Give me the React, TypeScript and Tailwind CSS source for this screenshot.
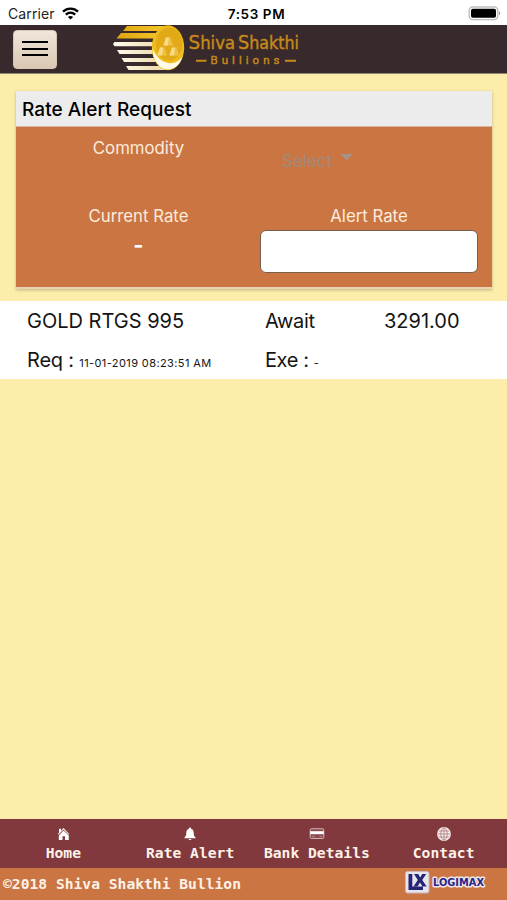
import React from "react";

interface RateAlert {
  id: number;
  commodity: string;
  status: string;
  rate: string;
  requestedAt: string;
  executedAt: string;
}

const alerts: RateAlert[] = [
  {
    id: 1,
    commodity: "GOLD RTGS 995",
    status: "Await",
    rate: "3291.00",
    requestedAt: "11-01-2019 08:23:51 AM",
    executedAt: "-",
  },
];

const HomeIcon = () => (
  <svg width="14" height="14" viewBox="0 0 14 14" fill="#fff">
    <path d="M7.500 1 13.200 6.900l-.7.700-5-5-5 5-.7-.7L3 5.700V1.800h2v2z" />
    <path d="M7.500 3.600 12.800 8.400V13H9V9.200H6.500V13H2.800V8.400z" />
  </svg>
);

const BellIcon = () => (
  <svg width="14" height="14" viewBox="0 0 14 14" fill="#fff">
    <path d="M7 .5c.6 0 1 .4 1 1v.3c1.800.5 2.700 2 2.700 4 0 2.600.5 3.500 1.800 4.700v.8h-11v-.8C2.800 9.300 3.300 8.400 3.300 5.800c0-2 .9-3.500 2.700-4v-.3c0-.6.4-1 1-1z" />
    <path d="M5.600 12h2.800c-.1.700-.7 1.200-1.400 1.200S5.700 12.700 5.600 12z" />
  </svg>
);

const CardIcon = () => (
  <svg width="16" height="14" viewBox="0 0 16 14">
    <rect x="1.200" y="1.700" width="13.600" height="9.800" rx="1.200" fill="#8d4c50" stroke="#d9bfc0" strokeWidth=".9" />
    <rect x="1.200" y="4.200" width="13.600" height="3" fill="#fff" />
    <path d="M3 9.500h3M10.500 9.500H13" stroke="#b98f91" strokeWidth=".8" />
  </svg>
);

const GlobeIcon = () => (
  <svg width="16" height="14" viewBox="0 0 16 14">
    <circle cx="8" cy="7" r="6.900" fill="#f8eeee" />
    <g fill="none" stroke="#a36b6e" strokeWidth=".7">
      <ellipse cx="8" cy="7" rx="3.200" ry="6" />
      <path d="M8 .8v12.400M1.800 7h12.400M2.800 4h10.400M2.800 10h10.400" />
    </g>
  </svg>
);

const tabs = [
  { label: "Home", icon: <HomeIcon /> },
  { label: "Rate Alert", icon: <BellIcon /> },
  { label: "Bank Details", icon: <CardIcon /> },
  { label: "Contact", icon: <GlobeIcon /> },
];

const StatusBar = () => (
  <div className="grid h-[25px] grid-cols-3 items-center bg-white pt-0.5 text-black">
    <div className="flex items-center gap-[7px] pl-2">
      <span className="text-[14px] leading-5 tracking-[0.1px] text-[#222]">Carrier</span>
      <svg width="17" height="13" viewBox="0 0 17 13" fill="none" stroke="#000" strokeWidth="2.300">
        <path d="M1 4.600C5.200.5 11.800.5 16 4.600" />
        <path d="M3.800 7.600c2.700-2.500 6.700-2.500 9.400 0" />
        <path d="M8.500 12.600 5.900 10c1.500-1.300 3.700-1.300 5.200 0z" fill="#000" stroke="none" />
      </svg>
    </div>
    <span className="pl-[6px] text-center text-[13.5px] font-semibold leading-5 tracking-[0.6px]">7:53 PM</span>
    <div className="flex justify-end pr-1.5">
      <svg width="33" height="15" viewBox="0 0 33 15">
        <rect x="1.200" y="1" width="28.600" height="12.600" rx="3.500" fill="#fff" stroke="#bdbdbd" strokeWidth="1.400" />
        <rect x="3" y="2.800" width="25" height="9" rx="1.800" fill="#000" />
        <path d="M31 5.300c1.600.7 1.600 3.300 0 4z" fill="#999" />
      </svg>
    </div>
  </div>
);

const Logo = () => (
  <svg width="190" height="47" viewBox="112 25 190 47" className="block overflow-visible">
    <defs>
      <linearGradient id="gold" x1="0" x2="1">
        <stop offset="0" stopColor="#e0a412" />
        <stop offset="1" stopColor="#f4c829" />
      </linearGradient>
      <linearGradient id="cream" x1="0" x2="1">
        <stop offset="0" stopColor="#fffdf0" />
        <stop offset="1" stopColor="#ecd9a4" />
      </linearGradient>
    </defs>
    <path d="M127 26h38v5h-42zM121 33h38v5.500h-42.500z" fill="url(#gold)" />
    <path d="M114.500 42H156v4.300h-41.500l-1.500-2.200zM117 50h40v4h-37.500zM121.500 58H160v4h-36zM126 66h40v4h-37.500z" fill="url(#cream)" />
    <ellipse cx="168" cy="47.700" rx="16.200" ry="22.500" fill="#eebc1c" />
    <path d="M152.500 48c0 12.500 7 21.500 15.500 21.500 6.500 0 12-5 14.500-13-4 5.500-9 7.500-14 6.500-8-1.500-13-7-16-15z" fill="#fffbe8" />
    <ellipse cx="169" cy="44" rx="13.200" ry="16.500" fill="#e3aa18" />
    <g fill="#f0c046">
      <path d="M166 37.500h4.500l2.500 8h-9.500zM160 47.500h4.500l2.500 8h-9.500zM172 47.500h4.500l2.500 8h-9.500z" />
    </g>
    <g fill="#f8dc85">
      <path d="M166 37.500h3l-1 8h-4.500zM160 47.500h3l-1 8h-4.500zM172 47.500h3l-1 8h-4.500z" />
    </g>
    <g fill="#c88a19" fontFamily="DejaVu Sans, sans-serif" stroke="#c88a19" strokeWidth=".4">
      <text x="188.500" y="48.500" fontSize="18" textLength="46.500" lengthAdjust="spacingAndGlyphs">
        <tspan fontSize="20">S</tspan>hiva
      </text>
      <text x="238" y="48.500" fontSize="18" textLength="61" lengthAdjust="spacingAndGlyphs">
        <tspan fontSize="20">S</tspan>hakthi
      </text>
      <text x="210.500" y="64" fontSize="11.500" fontFamily="Roboto, sans-serif" textLength="69" lengthAdjust="spacing">
        Bullions
      </text>
    </g>
    <path d="M196 60.800h10.500M285 60.800h11" stroke="#c88a19" strokeWidth="2" />
  </svg>
);

const Header = () => (
  <header className="flex h-[49px] border-b border-[#8d8474] bg-[#38292c]">
    <button className="mt-[5px] ml-[13px] flex h-[39px] w-11 flex-col items-center justify-center gap-[4.5px] rounded-[4px] border border-[#d8c5b5] bg-linear-to-b from-[#f0e6da] to-[#d9c8b2] pb-[2px]">
      <span className="h-[2px] w-[26px] bg-black" />
      <span className="h-[2px] w-[26px] bg-black" />
      <span className="h-[2px] w-[26px] bg-black" />
    </button>
    <div className="ml-[55px]">
      <Logo />
    </div>
  </header>
);

const RateAlertForm = () => (
  <section className="mr-[15px] ml-4 mt-[17px] h-[198px] border-b-2 border-[#ecd3b3] bg-[#cb7642] shadow-[0_1px_3px_rgba(0,0,0,0.25)]">
    <h1 className="h-9 border-b border-[#d5b7a0] bg-[#ececec] pl-[6px] text-[19px] font-medium leading-[37px] tracking-[0.07px] text-black">
      Rate Alert Request
    </h1>
    <div className="grid grid-cols-[245px_216px] text-[16.8px] leading-6 text-[#fcebdc]">
      <div className="h-[77px] pt-[9px] text-center">Commodity</div>
      <div className="flex h-[77px] gap-2 pt-[22px] pl-[21px] text-[17px] text-[#a18a78]">
        <span>Select</span>
        <svg width="13" height="6" viewBox="0 0 13 6" className="mt-[5px]" fill="#a3938a">
          <path d="M0 0h13L6.500 6z" />
        </svg>
      </div>
      <div className="text-center">
        <div>Current Rate</div>
        <div className="mt-[5px] text-[22px] font-bold leading-6 text-white">-</div>
      </div>
      <div className="text-center">
        <div>Alert Rate</div>
        <input className="mt-[2px] -ml-px block h-[43px] w-[218px] rounded-md border-[1.5px] border-[#75604e] bg-white px-3 text-black" />
      </div>
    </div>
  </section>
);

const AlertRow: React.FC<{ alert: RateAlert }> = ({ alert }) => (
  <div className="grid h-[78px] grid-cols-[238px_119px_1fr] grid-rows-2 bg-white pt-px pl-[27px] text-[20px] leading-[39px] text-[#151515]">
    <span>{alert.commodity}</span>
    <span className="tracking-[-0.35px]">{alert.status}</span>
    <span>{alert.rate}</span>
    <span className="tracking-[-0.2px]">
      Req : <span className="text-[11px] tracking-[0.4px]">{alert.requestedAt}</span>
    </span>
    <span className="tracking-[-0.4px]">
      Exe : <span className="text-[11px]">{alert.executedAt}</span>
    </span>
  </div>
);

const Footer = () => (
  <footer className="font-['DejaVu_Sans_Mono',monospace] text-[14.65px] font-bold text-[#fdf1e8]">
    <nav className="grid h-[49px] grid-cols-4 bg-[#81393d]">
      {tabs.map((tab) => (
        <a key={tab.label} className="flex flex-col items-center whitespace-nowrap pt-2">
          {tab.icon}
          <span className="mt-[3px] leading-[18px]">{tab.label}</span>
        </a>
      ))}
    </nav>
    <div className="flex h-8 justify-between bg-[#cb7642] pr-[21px] pl-[3px]">
      <span className="leading-8">©2018 Shiva Shakthi Bullion</span>
      <svg width="81" height="23" viewBox="0 0 81 23" className="mt-[3px]">
        <rect x=".5" y=".5" width="23.500" height="21.500" rx="2" fill="#e8e4ed" stroke="#c9b7bd" />
        <path d="M3.500 3h3.800v12.500H18V19H3.500z" fill="#252578" />
        <path d="M9 3h4.200l2 3.500 2-3.500h4l-4 6 4.500 6.500h-4.200l-2.500-4-2.500 4H8.500l4.300-6.500z" fill="#252578" />
        <text
          x="28"
          y="15"
          fontFamily="DejaVu Sans, sans-serif"
          fontSize="10"
          fontWeight="700"
          textLength="51"
          lengthAdjust="spacingAndGlyphs"
          fill="#272789"
          stroke="#f3e5e4"
          strokeWidth="3"
          strokeLinejoin="round"
          paintOrder="stroke"
        >
          LOGIMAX
        </text>
      </svg>
    </div>
  </footer>
);

export default function App() {
  return (
    <div className="flex h-[900px] w-[507px] flex-col overflow-hidden bg-[#fdedab] font-['Inter',sans-serif]">
      <StatusBar />
      <Header />
      <main className="flex-1">
        <RateAlertForm />
        <div className="mt-3">
          {alerts.map((alert) => (
            <AlertRow key={alert.id} alert={alert} />
          ))}
        </div>
      </main>
      <Footer />
    </div>
  );
}
